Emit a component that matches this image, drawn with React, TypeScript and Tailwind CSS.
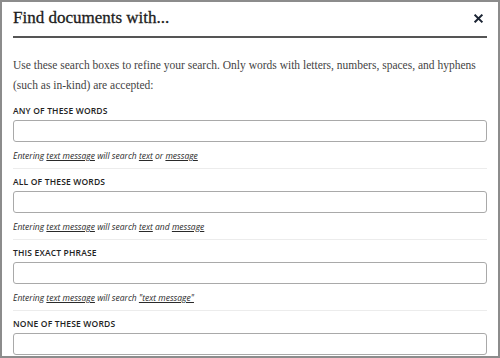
import React from "react"

const serif = { fontFamily: '"Liberation Serif", "DejaVu Serif", serif' }

const fields = [
  { label: "ANY OF THESE WORDS", join: "or", quoted: false },
  { label: "ALL OF THESE WORDS", join: "and", quoted: false },
  { label: "THIS EXACT PHRASE", join: "", quoted: true },
  { label: "NONE OF THESE WORDS", join: "", quoted: false, noHelp: true },
]

function Field({ label, join, quoted, noHelp }: { label: string; join: string; quoted: boolean; noHelp?: boolean }) {
  return (
    <div className="border-b border-[#ececec] pt-[7px] pb-[6px] first:pt-0">
      <label className="block text-[8.5px] font-semibold leading-[12px] tracking-[0.02em] text-[#222]">{label}</label>
      <input
        type="text"
        className="mt-[3px] block h-[22px] w-full rounded-[3px] border border-[#a9a9a9] bg-white px-2 outline-none"
      />
      {!noHelp && (
        <p className="mt-[8px] text-[8.5px] italic leading-[12px] text-[#2a2a2a]">
          Entering <span className="underline">text message</span> will search{" "}
          {quoted ? (
            <span className="underline">"text message"</span>
          ) : (
            <>
              <span className="underline">text</span> {join} <span className="underline">message</span>
            </>
          )}
        </p>
      )}
    </div>
  )
}

export default function App() {
  return (
    <div
      className="h-[358px] w-[500px] overflow-hidden border-2 border-[#8c8c8c] bg-white"
      style={{ fontFamily: '"Open Sans", "Liberation Sans", sans-serif' }}
    >
      <div className="mx-[11px] flex items-center justify-between border-b-2 border-[#555] pt-[6px] pb-[8px]">
        <h2
          className="text-[17px] font-normal leading-[20px] text-[#1c1c1c] [-webkit-text-stroke:0.3px_#1c1c1c]"
          style={serif}
        >
          Find documents with...
        </h2>
        <button className="mr-[4px] text-[#1b2433]" aria-label="Close">
          <svg width="9" height="9" viewBox="0 0 10 10">
            <path d="M1.5 1.5 L8.5 8.5 M8.5 1.5 L1.5 8.5" stroke="currentColor" strokeWidth="2.2" strokeLinecap="square" />
          </svg>
        </button>
      </div>
      <div className="px-[11px]">
        <p className="mt-[17px] mb-[3px] text-[11.5px] leading-[20px] text-[#444]" style={serif}>
          Use these search boxes to refine your search. Only words with letters, numbers, spaces, and hyphens (such as in-kind) are accepted:
        </p>
        {fields.map((f) => (
          <Field key={f.label} {...f} />
        ))}
      </div>
    </div>
  )
}
